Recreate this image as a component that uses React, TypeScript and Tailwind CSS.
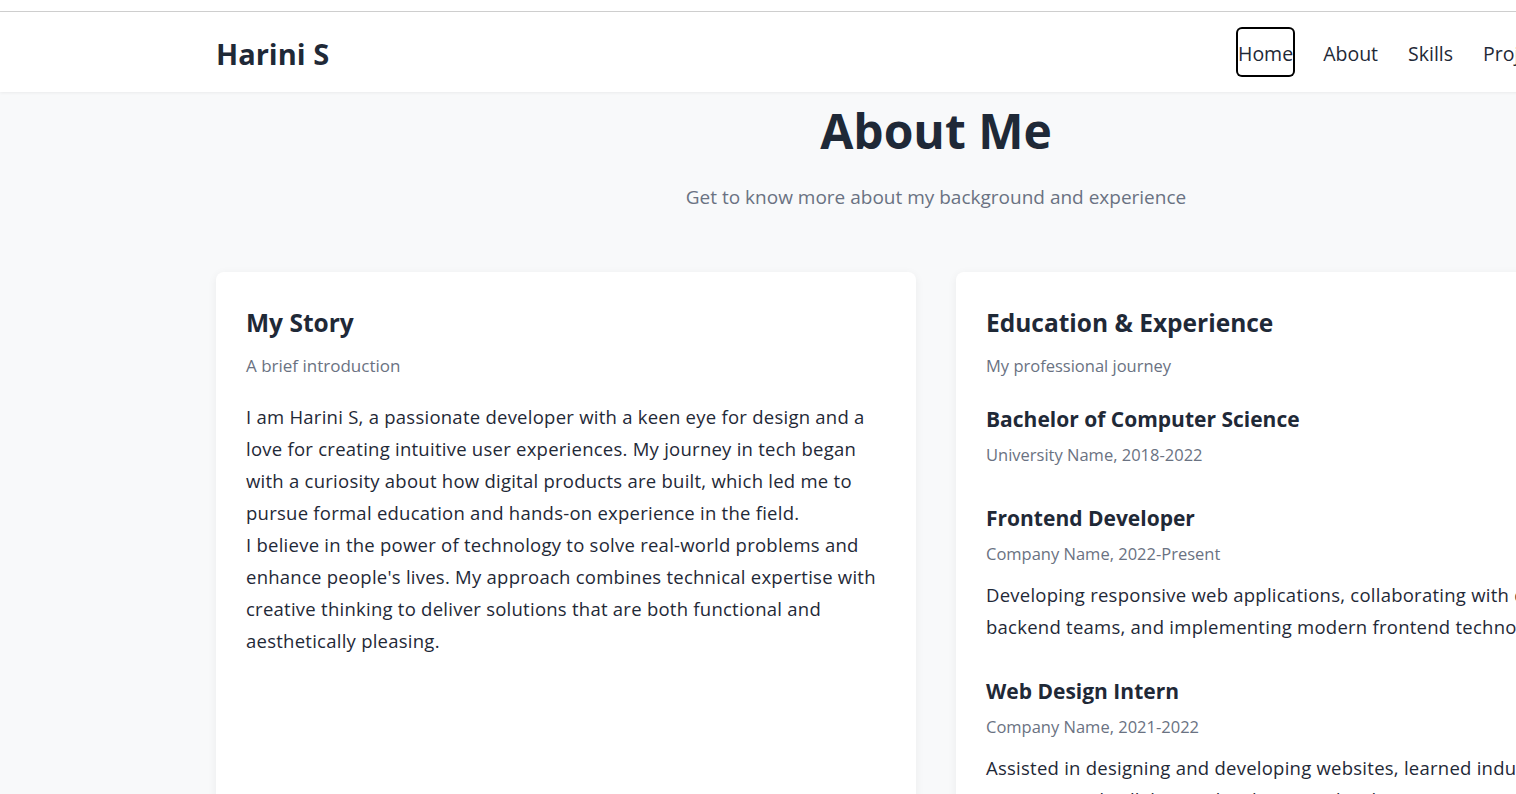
import React from 'react';

const navLinks = ['Home', 'About', 'Skills', 'Projects', 'Contact'];

const experience = [
  { title: 'Bachelor of Computer Science', place: 'University Name, 2018-2022', desc: '' },
  {
    title: 'Frontend Developer',
    place: 'Company Name, 2022-Present',
    desc: 'Developing responsive web applications, collaborating with design and backend teams, and implementing modern frontend technologies.',
  },
  {
    title: 'Web Design Intern',
    place: 'Company Name, 2021-2022',
    desc: 'Assisted in designing and developing websites, learned industry best practices and collaborated with senior developers.',
  },
];

const App = () => {
  return (
    <div className="h-screen w-full overflow-hidden bg-[#f8f9fa] font-['Open_Sans',sans-serif] text-[#1f2937]">
      <div className="w-[1872px]">
        <div className="h-[12px] bg-white border-b border-[#d0d0d0]"></div>

        {/* Header */}
        <header className="bg-white h-[80px] shadow-[0_1px_3px_rgba(0,0,0,0.06)] relative z-10">
          <div className="w-[1440px] mx-auto h-full flex items-center justify-between">
            <h1 className="text-[29px] font-bold leading-none mt-[2px]">Harini S</h1>
            <nav className="flex items-center gap-[30px]">
              {navLinks.map((link, idx) => (
                <a
                  key={link}
                  href="#"
                  className={`text-[19.5px] font-medium leading-[26px] pt-[12px] pb-[8px] ${idx === 0 ? 'ring-2 ring-black rounded-[4px]' : ''}`}
                >
                  {link}
                </a>
              ))}
            </nav>
          </div>
        </header>

        {/* About */}
        <section className="w-[1440px] mx-auto">
          <div className="text-center pt-[9px]">
            <h2 className="text-[48px] font-bold leading-[60px]">About Me</h2>
            <p className="text-[19px] text-gray-500 leading-[28px] mt-[22px]">
              Get to know more about my background and experience
            </p>
          </div>

          <div className="grid grid-cols-2 gap-[40px] mt-[61px]">
            <div className="bg-white rounded-lg shadow-[0_2px_10px_rgba(0,0,0,0.06)] px-[30px] pt-[34px] h-[560px]">
              <h3 className="text-[24.5px] font-bold leading-[34px]">My Story</h3>
              <p className="text-[17px] text-gray-500 leading-[28px] mt-[12px]">A brief introduction</p>
              <div className="text-[18.5px] tracking-[0.25px] leading-[32px] mt-[21px]">
                <p>
                  I am Harini S, a passionate developer with a keen eye for design and a love for creating intuitive user
                  experiences. My journey in tech began with a curiosity about how digital products are built, which led
                  me to pursue formal education and hands-on experience in the field.
                </p>
                <p>
                  I believe in the power of technology to solve real-world problems and enhance people's lives. My
                  approach combines technical expertise with creative thinking to deliver solutions that are both
                  functional and aesthetically pleasing.
                </p>
              </div>
            </div>

            <div className="bg-white rounded-lg shadow-[0_2px_10px_rgba(0,0,0,0.06)] px-[30px] pt-[34px] h-[560px]">
              <h3 className="text-[24.5px] font-bold leading-[34px]">Education &amp; Experience</h3>
              <p className="text-[16.5px] text-gray-500 leading-[28px] mt-[12px]">My professional journey</p>
              <div className="mt-[24px] flex flex-col">
                {experience.map((item, idx) => (
                  <div key={item.title} className={idx === 0 ? 'mb-[35px]' : 'mb-[33px]'}>
                    <h4 className="text-[21px] font-bold leading-[30px]">{item.title}</h4>
                    <p className="text-[16.5px] text-gray-500 leading-[26px] mt-[8px]">{item.place}</p>
                    {item.desc && (
                      <p className="text-[18.5px] tracking-[0.25px] leading-[32px] mt-[12px]">{item.desc}</p>
                    )}
                  </div>
                ))}
              </div>
            </div>
          </div>
        </section>
      </div>
    </div>
  );
};

export default App;
